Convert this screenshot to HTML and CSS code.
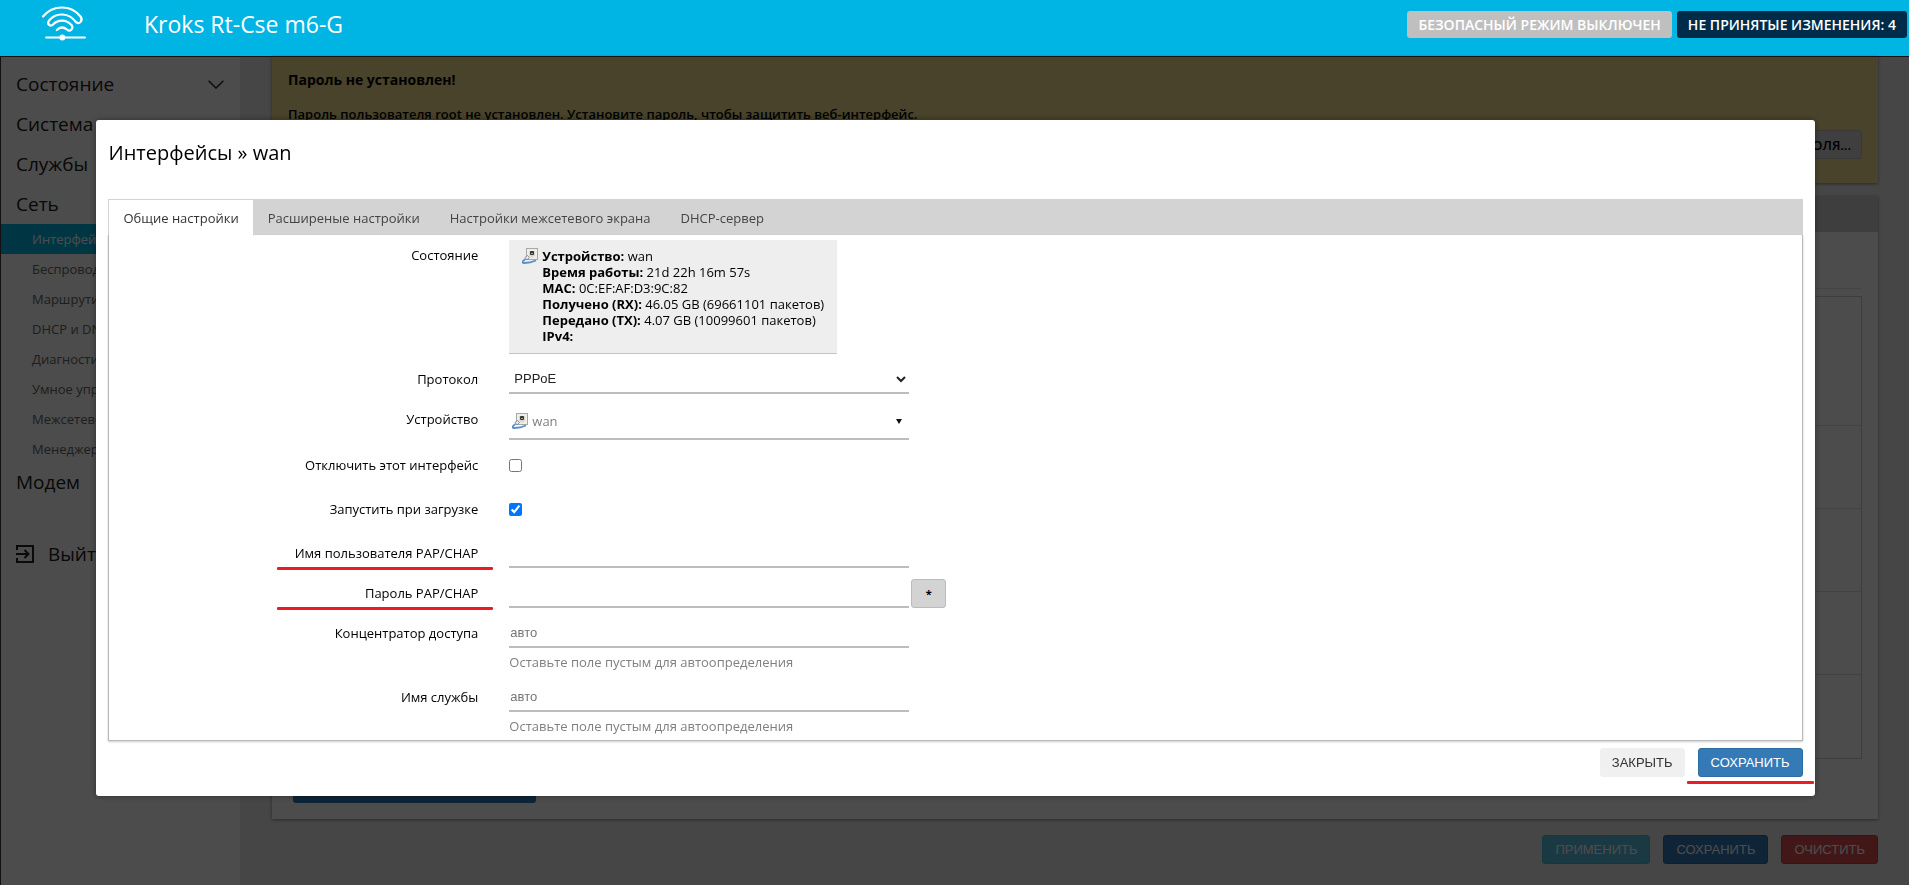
FILE: index.html
```html
<!DOCTYPE html>
<html lang="ru">
<head>
<meta charset="utf-8">
<title>Kroks Rt-Cse m6-G</title>
<link rel="stylesheet" href="styles.css">
</head>
<body>
<svg class="defs" aria-hidden="true">
  <symbol id="eth" viewBox="0 0 16 16">
    <rect x="4.500" y=".5" width="11" height="11" fill="#eeeeea" stroke="#a9a9a4"/>
    <path d="M7 3h6v5h-1.500v1.500h-3V8H7z" fill="#d8d8d2"/>
    <rect x="8" y="3" width="4" height="4" rx="1" fill="#33363a"/>
    <rect x="9" y="5" width="2" height="1" fill="#b9a84c"/>
    <path d="M3 9.500 5.500 7.500l2 2L5 12z" fill="#e4e8ee" stroke="#6f7d92" stroke-width=".8"/>
    <path d="M3.500 11C.5 13-.5 15 2 15c3 0 7-.2 12-2.500" fill="none" stroke="#5b8dc9" stroke-width="1.800"/>
  </symbol>
</svg>

<header class="topbar">
  <svg class="logo" viewBox="0 0 46 36" fill="none" stroke="#fff" stroke-width="2.200" stroke-linecap="round" stroke-linejoin="round">
    <path d="M2 10.500C12 -1.500 30 -1.500 39.500 10.500C42.500 14.500 38.500 19 35 16.200C28 6.500 15 6 8 14.500C5.500 18.500 9.500 21 12 18.500C17.500 13 25 13.500 30.500 19C33 22.500 29 26.500 26 23.500C22.500 20.800 19 20.800 15.800 24"/>
    <path d="M5 31.500h39" stroke-width="1.800"/>
    <circle cx="21.300" cy="31.500" r="3" fill="#fff" stroke="none"/>
  </svg>
  <a class="brand" href="#">Kroks Rt-Cse m6-G</a>
  <div class="badges">
    <a class="badge badge-off" href="#">БЕЗОПАСНЫЙ РЕЖИМ ВЫКЛЮЧЕН</a>
    <a class="badge badge-changes" href="#">НЕ ПРИНЯТЫЕ ИЗМЕНЕНИЯ: 4</a>
  </div>
</header>

<div class="shell">
  <nav class="sidebar">
    <a class="nav-item" href="#">Состояние
      <svg class="chevron" viewBox="0 0 16 9" fill="none" stroke="#333" stroke-width="1.600"><path d="M.6.8 8 8 15.400.8"/></svg>
    </a>
    <a class="nav-item" href="#">Система</a>
    <a class="nav-item" href="#">Службы</a>
    <a class="nav-item" href="#">Сеть</a>
    <div class="subnav">
      <a class="sub-item active" href="#">Интерфейсы</a>
      <a class="sub-item" href="#">Беспроводная сеть</a>
      <a class="sub-item" href="#">Маршрутизация</a>
      <a class="sub-item" href="#">DHCP и DNS</a>
      <a class="sub-item" href="#">Диагностика</a>
      <a class="sub-item" href="#">Умное управление</a>
      <a class="sub-item" href="#">Межсетевой экран</a>
      <a class="sub-item" href="#">Менеджер</a>
    </div>
    <a class="nav-item" href="#">Модем</a>
    <a class="nav-item logout" href="#">
      <svg class="exit" viewBox="0 0 18 18" fill="none" stroke="#222" stroke-width="2"><path d="M1 5V1h16v16H1v-4M0 9h12M8.500 5l4 4-4 4"/></svg>
      Выйти
    </a>
  </nav>

  <main class="main">
    <section class="alert">
      <h4>Пароль не установлен!</h4>
      <p>Пароль пользователя root не установлен. Установите пароль, чтобы защитить веб-интерфейс.</p>
      <button class="alert-btn" type="button">НАСТРОЙКА ПАРОЛЯ...</button>
    </section>
    <section class="card">
      <div class="card-tabs"></div>
      <div class="card-body">
        <div class="card-head"></div>
        <div class="iface-list">
          <div class="iface iface-first"></div>
          <div class="iface"></div>
          <div class="iface"></div>
          <div class="iface"></div>
          <div class="iface"></div>
        </div>
        <button class="add" type="button" aria-label="Добавить интерфейс"></button>
      </div>
    </section>
    <div class="page-actions">
      <button class="btn btn-apply" type="button">ПРИМЕНИТЬ</button>
      <button class="btn btn-primary" type="button">СОХРАНИТЬ</button>
      <button class="btn btn-reset" type="button">ОЧИСТИТЬ</button>
    </div>
  </main>
</div>

<div class="overlay">
  <div class="modal" role="dialog" aria-labelledby="dlg-title">
    <h2 id="dlg-title">Интерфейсы » wan</h2>
    <div class="tabs">
      <button class="tab selected" type="button">Общие настройки</button>
      <button class="tab" type="button">Расширеные настройки</button>
      <button class="tab" type="button">Настройки межсетевого экрана</button>
      <button class="tab" type="button">DHCP-сервер</button>
    </div>
    <form class="panel">
      <div class="row">
        <span class="label">Состояние</span>
        <div class="field">
          <div class="status">
            <svg class="eth"><use href="#eth"/></svg>
            <div>
              <b>Устройство:</b> wan<br>
              <b>Время работы:</b> 21d 22h 16m 57s<br>
              <b>MAC:</b> 0C:EF:AF:D3:9C:82<br>
              <b>Получено (RX):</b> 46.05 GB (69661101 пакетов)<br>
              <b>Передано (TX):</b> 4.07 GB (10099601 пакетов)<br>
              <b>IPv4:</b>
            </div>
          </div>
        </div>
      </div>
      <div class="row">
        <label class="label" for="proto">Протокол</label>
        <div class="field"><select class="control" id="proto"><option>PPPoE</option></select></div>
      </div>
      <div class="row">
        <label class="label" for="device">Устройство</label>
        <div class="field">
          <button class="control device" id="device" type="button">
            <svg class="eth"><use href="#eth"/></svg>wan<span class="caret"></span>
          </button>
        </div>
      </div>
      <div class="row">
        <label class="label" for="disabled">Отключить этот интерфейс</label>
        <div class="field check"><input type="checkbox" id="disabled"></div>
      </div>
      <div class="row">
        <label class="label" for="auto">Запустить при загрузке</label>
        <div class="field check"><input type="checkbox" id="auto" checked></div>
      </div>
      <div class="row marked">
        <label class="label" for="user">Имя пользователя PAP/CHAP</label>
        <div class="field"><input class="control" type="text" id="user"></div>
      </div>
      <div class="row marked">
        <label class="label" for="pass">Пароль PAP/CHAP</label>
        <div class="field"><input class="control" type="password" id="pass"><button class="reveal" type="button">*</button></div>
      </div>
      <div class="row">
        <label class="label" for="ac">Концентратор доступа</label>
        <div class="field"><input class="control" type="text" id="ac" placeholder="авто"><p class="hint">Оставьте поле пустым для автоопределения</p></div>
      </div>
      <div class="row">
        <label class="label" for="service">Имя службы</label>
        <div class="field"><input class="control" type="text" id="service" placeholder="авто"><p class="hint">Оставьте поле пустым для автоопределения</p></div>
      </div>
    </form>
    <div class="dialog-actions">
      <button class="btn btn-close" type="button">ЗАКРЫТЬ</button>
      <span class="save-wrap"><button class="btn btn-primary" type="button">СОХРАНИТЬ</button></span>
    </div>
  </div>
</div>
</body>
</html>
```
FILE: styles.css
```css
* { box-sizing: border-box; }
html, body { height: 100%; }
body {
  margin: 0;
  display: flex;
  flex-direction: column;
  background: #eaeaea;
  color: #000;
  font: 13px/20px "Segoe UI", "Open Sans", "Noto Sans", sans-serif;
  overflow: hidden;
}
a { color: inherit; text-decoration: none; }
button, input, select { font: inherit; }
.defs { position: absolute; width: 0; height: 0; }

.topbar {
  flex: none;
  display: flex;
  align-items: flex-start;
  height: 56px;
  padding: 0 2px 0 41px;
  background: #00b5e4;
  color: #fff;
}
.logo { width: 46px; height: 36px; margin-top: 6px; }
.brand { margin: 8px 0 0 57px; font-size: 23px; line-height: 32px; font-weight: 500; }
.badges { display: flex; gap: 5px; margin: 11px 0 0 auto; }
.badge { padding: 0 11px; border-radius: 3px; font-size: 14px; font-weight: 600; line-height: 27px; }
.badge-off { background: #bfbfbf; }
.badge-changes { background: #002b49; }

.shell { flex: 1; display: flex; min-height: 0; }
.sidebar { flex: none; width: 240px; padding-top: 8px; background: #fdfdfd; }
.nav-item {
  display: flex;
  align-items: center;
  height: 40px;
  padding: 0 16px;
  color: #202020;
  font-size: 19px;
}
.chevron { width: 16px; height: 9px; margin-left: auto; }
.sub-item { display: block; padding: 0 32px; color: #666; line-height: 30px; }
.sub-item.active { background: #00b5e4; color: #fff; }
.subnav { margin-bottom: -2px; }
.logout { margin-top: 32px; gap: 14px; }
.exit { width: 18px; height: 18px; }

.main { flex: 1; padding: 0 31px 0 32px; }
.alert {
  display: flex;
  flex-direction: column;
  height: 127px;
  padding: 14px 16px 0;
  background: #f0e08c;
  font-weight: 600;
  box-shadow: 0 1px 3px rgba(0, 0, 0, .4);
}
.alert h4, .alert p { margin: 0 0 14px; font-size: 13px; }
.alert h4 { font-size: 14px; }
.alert-btn {
  align-self: flex-end;
  margin-top: -8px;
  height: 29px;
  padding: 0 10px;
  border: 1px solid #bbb;
  border-radius: 3px;
  background: #d3d3d3;
  font-weight: 600;
}
.card { margin-top: 13px; background: #fff; box-shadow: 0 1px 3px rgba(0, 0, 0, .4); }
.card-tabs { height: 36px; background: #cfcfcf; }
.card-body { padding: 0 16px 16px; }
.card-head { height: 57px; border-bottom: 1px solid #e4e4e4; }
.iface-list { margin-top: 7px; border: 1px solid #ccc; }
.iface { height: 83px; border-bottom: 1px solid #ddd; }
.iface-first { height: 129px; }
.iface:last-child { border-bottom: 0; }
.add { display: block; width: 243px; height: 30px; margin: 14px 0 0 5px; border: 0; border-radius: 3px; background: #2f79b5; }
.page-actions { display: flex; justify-content: flex-end; gap: 13px; margin-top: 16px; }

.btn {
  height: 29px;
  padding: 0 12px;
  border: 1px solid;
  border-radius: 3px;
  font-family: "Liberation Sans", Arial, sans-serif;
  font-size: 13px;
  line-height: 20px;
  color: #fff;
}
.btn-apply { background: #5bc0de; border-color: #46b8da; }
.btn-primary { background: #337ab7; border-color: #2e6da4; }
.btn-reset { background: #d9534f; border-color: #d43f3a; }
.btn-close { padding: 0 11px; background: #f0f0f0; border-color: #f0f0f0; color: #333; }

.overlay {
  position: fixed;
  inset: 56px 0 0 0;
  padding: 63px calc(5% - 1px) 0 5%;
  border: solid #111;
  border-width: 1px 0 0 1px;
  background: rgba(0, 0, 0, .7);
}
.modal {
  padding: 12px 12px 19px;
  border-radius: 3px;
  background: #fff;
  box-shadow: 0 0 6px rgba(0, 0, 0, .4);
}
.modal h2 { margin: 7px 0 32px; font-size: 20px; line-height: 28px; font-weight: 400; }
.tabs { display: flex; height: 36px; background: #d3d3d3; }
.tab { padding: 2px 15px 0; border: 0; background: none; color: #444; }
.tab.selected { padding: 1px 14px 0; border: solid #d3d3d3; border-width: 1px 0 0 1px; background: #fff; color: #333; }
.panel {
  padding: 5px 0 4px;
  border: solid #b8b8b8;
  border-width: 0 1px 1px;
  box-shadow: 0 1px 2px rgba(0, 0, 0, .2);
}
.row { position: relative; display: grid; grid-template-columns: 21.8% 1fr; gap: 31px; padding-bottom: 10px; }
.row:last-child { padding-bottom: 0; }
.label { padding-top: 5px; text-align: right; }
.field { display: flex; flex-wrap: wrap; align-items: flex-start; }
.status {
  display: flex;
  gap: 4px;
  height: 114px;
  padding: 8px 13px;
  border-bottom: 1px solid #c4c4c4;
  background: #eee;
  line-height: 16px;
}
.eth { flex: none; width: 16px; height: 16px; }
.control {
  width: 400px;
  height: 30px;
  padding: 0 1px;
  border: 0;
  border-bottom: 2px solid #bdbdbd;
  border-radius: 0;
  outline: 0;
  background: transparent;
  color: #222;
  font-family: "Liberation Sans", Arial, sans-serif;
}
.control::placeholder { color: #757575; }
.device { display: flex; align-items: center; gap: 4px; height: 36px; padding: 0 7px 0 3px; color: #808080; font-family: inherit; }
.caret { margin-left: auto; border: solid transparent; border-width: 5px 3px 0; border-top-color: #111; }
.check { height: 34px; padding-top: 9px; }
.check input { width: 13px; height: 13px; margin: 0; }
.reveal { width: 35px; height: 29px; margin: 1px 0 0 2px; padding: 0; border: 1px solid #bbb; border-radius: 3px; background: #d3d3d3; font-size: 11px; font-weight: 700; }
.hint { flex-basis: 100%; margin: 4px 0 0; color: #808080; }
.marked::after {
  content: "";
  position: absolute;
  top: 29px;
  left: 168px;
  width: 216px;
  height: 3px;
  border-radius: 1px;
  background: #ed1c24;
}
.dialog-actions { display: flex; justify-content: flex-end; gap: 13px; margin-top: 7px; }
.save-wrap { position: relative; }
.save-wrap::after {
  content: "";
  position: absolute;
  top: 33px;
  left: -11px;
  right: -11px;
  height: 3px;
  border-radius: 1px;
  background: #ed1c24;
}
```
